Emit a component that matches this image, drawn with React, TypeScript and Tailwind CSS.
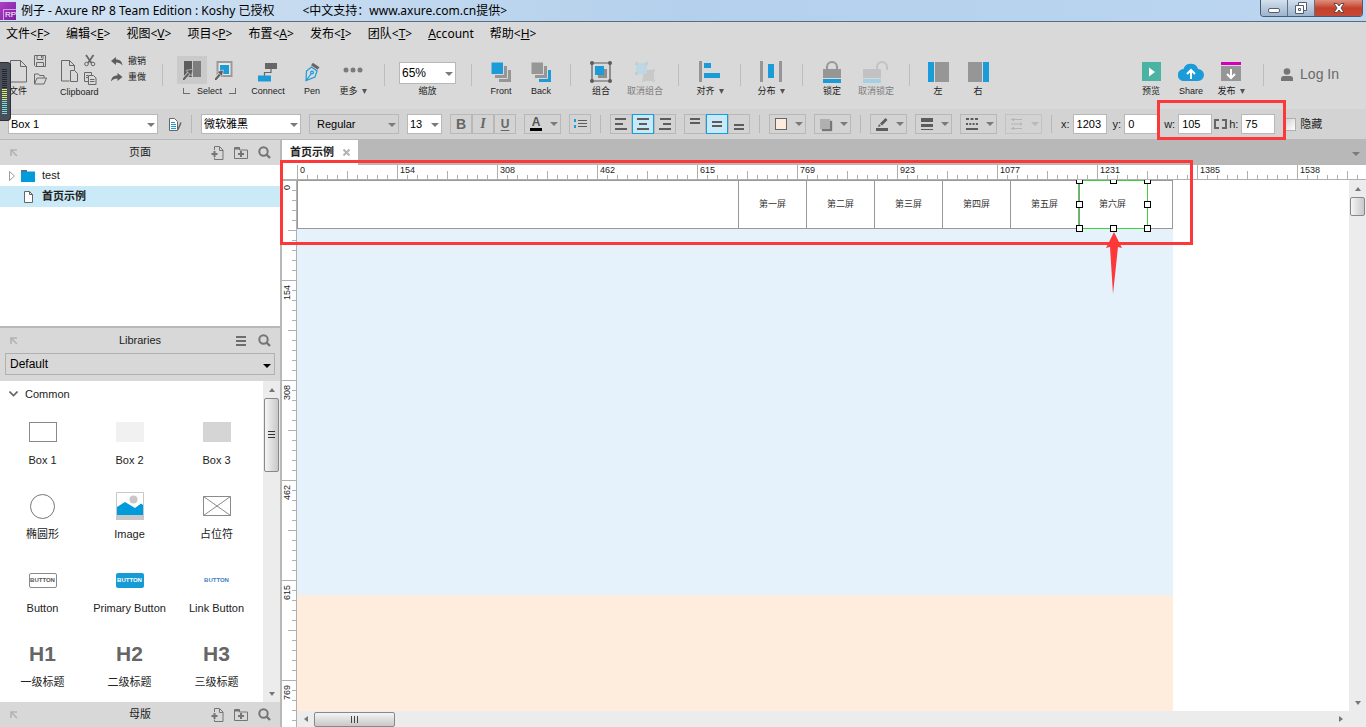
import { ReactNode } from 'react';
import clsx from 'clsx';

const topRuler = ['0', '154', '308', '462', '615', '769', '923', '1077', '1231', '1385', '1538'];
const sideRuler = ['0', '154', '308', '462', '615', '769'];
const screens = ['第一屏', '第二屏', '第三屏', '第四屏', '第五屏', '第六屏'];

const menus = [
  { label: '文件', hotkey: 'F' },
  { label: '编辑', hotkey: 'E' },
  { label: '视图', hotkey: 'V' },
  { label: '项目', hotkey: 'P' },
  { label: '布置', hotkey: 'A' },
  { label: '发布', hotkey: 'I' },
  { label: '团队', hotkey: 'T' },
  { label: 'Account', hotkey: '' },
  { label: '帮助', hotkey: 'H' },
];

const handles = [
  '-left-1 -top-1',
  'left-[30px] -top-1',
  '-right-1 -top-1',
  '-left-1 top-[20px]',
  '-right-1 top-[20px]',
  '-left-1 -bottom-1',
  'left-[30px] -bottom-1',
  '-right-1 -bottom-1',
];

function Caret({ className = 'text-[#7a7a7a]' }: { className?: string }) {
  return (
    <svg width="8" height="4" viewBox="0 0 8 4" className={clsx('shrink-0', className)}>
      <path d="M0 0h8L4 4z" fill="currentColor" />
    </svg>
  );
}

function ScrollArrow({ className }: { className?: string }) {
  return (
    <svg width="6" height="4" viewBox="0 0 6 4" className={className}>
      <path d="M0 0h6L3 4z" fill="#777" />
    </svg>
  );
}

function ToolSep({ className }: { className?: string }) {
  return <div className={clsx('mt-[18px] h-[22px] w-px shrink-0 bg-[#bdbdbd]', className)} />;
}

function Tool({
  label,
  width,
  disabled,
  menu,
  children,
}: {
  label: string;
  width: string;
  disabled?: boolean;
  menu?: boolean;
  children: ReactNode;
}) {
  return (
    <button
      className={clsx(
        'flex shrink-0 flex-col items-center pt-[12px] text-[9px] leading-[12px] whitespace-nowrap',
        width,
        disabled ? 'text-[#7c7c7c]' : 'text-[#1c1c1c]',
      )}
    >
      <span className="flex h-[27px] items-center justify-center">{children}</span>
      <span className="flex items-center gap-1">
        {label}
        {menu && (
          <svg width="5" height="5" viewBox="0 0 5 5">
            <path d="M0 0h5L2.5 5z" fill="#555" />
          </svg>
        )}
      </span>
    </button>
  );
}

function Picker({
  label,
  value,
  width,
  gray,
  height = 'h-5',
  text = 'text-[11px]',
}: {
  label: string;
  value: string;
  width: string;
  gray?: boolean;
  height?: string;
  text?: string;
}) {
  return (
    <div className={clsx('relative shrink-0', width)}>
      <select
        aria-label={label}
        defaultValue={value}
        className={clsx(
          'block w-full appearance-none border border-[#b8b8b8] text-black outline-none',
          height,
          text,
          gray ? 'bg-transparent pl-[7px]' : 'bg-white pl-[2px]',
        )}
      >
        <option>{value}</option>
      </select>
      <span className="pointer-events-none absolute inset-y-0 right-[3px] flex items-center pt-px">
        <Caret />
      </span>
    </div>
  );
}

function FormatSep() {
  return <div className="mx-px h-[18px] w-px shrink-0 bg-[#b8b8b8]" />;
}

function Toggle({ label, active, children }: { label: string; active?: boolean; children: ReactNode }) {
  return (
    <button
      aria-label={label}
      className={clsx(
        'flex h-5 w-[22px] shrink-0 items-center justify-center border',
        active ? 'border-[#1b9cd8] bg-[#c9e9f8]' : 'border-[#b8b8b8]',
      )}
    >
      {children}
    </button>
  );
}

function DropButton({ label, disabled, children }: { label: string; disabled?: boolean; children: ReactNode }) {
  return (
    <button
      aria-label={label}
      className={clsx(
        'flex h-5 w-[37px] shrink-0 items-center justify-between border border-[#b8b8b8] pr-[2px] pl-[5px]',
        disabled && 'opacity-60',
      )}
    >
      {children}
      <Caret className={disabled ? 'text-[#a8a8a8]' : 'text-[#7a7a7a]'} />
    </button>
  );
}

function Lines({ rows }: { rows: [number, number, number][] }) {
  return (
    <svg width="14" height="14" viewBox="0 0 14 14" fill="#5c5c5c">
      {rows.map(([x, y, w]) => (
        <rect key={y} x={x} y={y} width={w} height="2" />
      ))}
    </svg>
  );
}

function NumberField({ label, value }: { label: string; value: string }) {
  return (
    <label className="flex shrink-0 items-center gap-[3px]">
      <span>{label}</span>
      <input
        defaultValue={value}
        className="h-5 w-[34px] border border-[#b8b8b8] bg-white pl-[3px] text-black outline-none"
      />
    </label>
  );
}

function PopOutIcon() {
  return (
    <svg width="8" height="8" viewBox="0 0 8 8" className="ml-[10px]" fill="none" stroke="#b3b3b3" strokeWidth="1.6">
      <path d="M1 7V1h6M1 1l6 6" />
    </svg>
  );
}

function SearchIcon() {
  return (
    <svg width="13" height="13" viewBox="0 0 13 13" fill="none" stroke="#757575" strokeWidth="2">
      <circle cx="5.5" cy="5.5" r="4.2" />
      <path d="M8.5 8.5l3.500 3.500" strokeWidth="2.4" />
    </svg>
  );
}

function AddPageIcon() {
  return (
    <svg width="13" height="14" viewBox="0 0 13 14" fill="none" stroke="#757575">
      <path d="M3.500 4V.5h5l3.500 3.500v9.500H3.500v-2M8.500 1v3.500H12" />
      <path d="M3.500 5v6M.5 8h6" strokeWidth="2" />
    </svg>
  );
}

function AddFolderIcon() {
  return (
    <svg width="14" height="12" viewBox="0 0 14 12" fill="none" stroke="#757575">
      <path d="M.5 11.500V.5h5V3h8v8.500z" />
      <path d="M1 1.500h4.500" strokeWidth="2" />
      <path d="M7 4v6M4 7h6" strokeWidth="2" />
    </svg>
  );
}

function MenuIcon() {
  return (
    <svg width="10" height="10" viewBox="0 0 10 10" fill="#6d6d6d">
      <path d="M0 0h10v2H0zM0 4h10v2H0zM0 8h10v2H0z" />
    </svg>
  );
}

function PanelHeader({ title, children }: { title: string; children: ReactNode }) {
  return (
    <div className="grid h-[25px] shrink-0 grid-cols-[1fr_auto_1fr] items-center bg-[#d8d8d8] text-[11px] text-[#222]">
      <button aria-label={`Pop out ${title}`}>
        <PopOutIcon />
      </button>
      <h2>{title}</h2>
      <div className="flex items-center justify-end gap-[10px] pr-[9px]">{children}</div>
    </div>
  );
}

function PageTools() {
  return (
    <>
      <button aria-label="Add page">
        <AddPageIcon />
      </button>
      <button aria-label="Add folder">
        <AddFolderIcon />
      </button>
      <button aria-label="Search">
        <SearchIcon />
      </button>
    </>
  );
}

function Widget({ label, children }: { label: string; children: ReactNode }) {
  return (
    <div className="flex h-[74px] flex-col items-center">
      <div className="flex h-7 items-center justify-center">{children}</div>
      <span className="mt-[7px] leading-[14px] whitespace-nowrap">{label}</span>
    </div>
  );
}

function PageIcon({ className }: { className?: string }) {
  return (
    <svg width="18" height="23" viewBox="0 0 18 23" fill="none" stroke="#686868" className={className}>
      <path d="M.5.5h10l6 6v15.500H.5zM10.500.5v6h6" />
    </svg>
  );
}

function TitleBar() {
  return (
    <header className="flex h-[22px] shrink-0 items-center justify-between border-b border-[#5b6b80] bg-linear-to-r from-[#d3e3f3] via-[#b4d0ec] to-[#bcd6f0] font-['Noto_Sans','Noto_Sans_CJK_SC',sans-serif] text-[12px] text-black">
      <div className="flex items-center whitespace-nowrap">
        <div className="mr-[5px] flex h-[18px] w-4 items-end justify-end bg-linear-to-br from-[#b03fc6] to-[#7a1fa0] font-['Liberation_Sans',sans-serif] text-[8px] leading-[10px] text-white">
          <span className="border-t border-l border-[#d79be4] pl-px">RP</span>
        </div>
        <h1>例子 - Axure RP 8 Team Edition : Koshy 已授权</h1>
        <span className="ml-7">&lt;中文支持：www.axure.com.cn提供&gt;</span>
      </div>
      <div className="mr-[3px] flex h-[17px] self-start overflow-hidden rounded-b border border-t-0 border-[#4a5a70]">
        <button
          aria-label="Minimize"
          className="flex w-[27px] items-end justify-center border-r border-[#5f7088] bg-linear-to-b from-[#d3e0ee] to-[#9db3cc] pb-[3px]"
        >
          <span className="h-[5px] w-3 rounded-xs border border-[#555d6b] bg-white" />
        </button>
        <button
          aria-label="Restore"
          className="flex w-[27px] items-center justify-center border-r border-[#5f7088] bg-linear-to-b from-[#d3e0ee] to-[#9db3cc]"
        >
          <svg width="12" height="12" viewBox="0 0 12 12" fill="#fff" stroke="#555d6b">
            <path d="M3.500.5h8v8h-8z" />
            <path d="M.5 3.500h8v8h-8z" />
            <path d="M3.500 6.500h2v2h-2z" />
          </svg>
        </button>
        <button
          aria-label="Close"
          className="flex w-[47px] items-center justify-center bg-linear-to-b from-[#dd8f7e] via-[#c5402c] to-[#c54a35]"
        >
          <svg width="12" height="10" viewBox="0 0 12 10">
            <path d="M1 .5h3l2 2.500L8 .5h3L8 5l3 4.500H8L6 7 4 9.500H1L4 5z" fill="#fff" stroke="#5b4a50" />
          </svg>
        </button>
      </div>
    </header>
  );
}

function Toolbar() {
  return (
    <div className="flex h-[63px] shrink-0 items-start text-[#1c1c1c]">
      <div className="h-full w-[56px] shrink-0">
        <div className="flex pt-[9px] pl-[10px]">
          <PageIcon className="mt-[5px]" />
          <div className="ml-[6px] flex flex-col gap-[6px]">
            <svg width="13" height="12" viewBox="0 0 13 12" fill="none" stroke="#686868">
              <path d="M.5.5h11v11H1.500l-1-1zM3 .5v4h6v-4M2.500 11V7.500h7V11M7.500 1v2" />
            </svg>
            <svg width="13" height="12" viewBox="0 0 13 12" fill="none" stroke="#686868">
              <path d="M.5 11V1h4l1 1.500h4.500V5M.5 11l2.500-6h9.500l-2.500 6z" />
            </svg>
          </div>
        </div>
        <div className="pl-[9px] text-[9px] leading-[12px]">文件</div>
      </div>
      <div className="h-full w-[50px] shrink-0">
        <div className="flex pt-[8px] pl-[5px]">
          <svg width="18" height="23" viewBox="0 0 18 23" fill="none" stroke="#686868" className="mt-[6px]">
            <path d="M8.500 21H.5V.5h8l5 5V10M8.500.5v5h5" />
            <path d="M9.500 10.500h4l3 3v8h-7z" />
          </svg>
          <div className="ml-[5px] flex flex-col gap-[5px]">
            <svg width="12" height="13" viewBox="0 0 12 13" fill="none" stroke="#686868">
              <path d="M2 1l5.500 8M9.500 1L4 9" strokeWidth="1.8" />
              <circle cx="2.5" cy="10" r="1.8" />
              <circle cx="9" cy="10" r="1.8" />
            </svg>
            <svg width="13" height="13" viewBox="0 0 13 13" fill="none" stroke="#686868">
              <path d="M4 9.500H.5V.5h7V3M4.500 3.500h5l2.500 2.500v6.500H4.500zM6 7.500h4.500M6 9.500h4.500M2 3.500h2M2 5.500h2" />
            </svg>
          </div>
        </div>
        <div className="pt-px pl-1 text-[9px] leading-[12px]">Clipboard</div>
      </div>
      <div className="flex w-[56px] shrink-0 flex-col gap-1 pt-[9px] pl-[5px] text-[9px] leading-[12px]">
        <button className="flex items-center gap-[5px]">
          <svg width="12" height="9" viewBox="0 0 12 9" fill="#5c5c5c">
            <path d="M0 4l5-4v2.500c4 0 6 2 6.500 6C10 6.500 8 5.500 5 5.500V8z" />
          </svg>
          撤销
        </button>
        <button className="flex items-center gap-[5px]">
          <svg width="12" height="9" viewBox="0 0 12 9" fill="#5c5c5c">
            <path d="M11.500 4l-5-4v2.500C2.500 2.500.5 4.500 0 8.500 1.500 6.500 3.500 5.500 6.500 5.500V8z" />
          </svg>
          重做
        </button>
      </div>
      <ToolSep />
      <div className="ml-[14px] w-[65px] shrink-0 pt-[10px] text-[9px] leading-[12px]">
        <div className="flex gap-2">
          <button aria-label="Select intersected" className="flex h-7 w-[30px] items-center justify-center bg-[#cacaca]">
            <svg width="18" height="20" viewBox="0 0 18 20">
              <path d="M1 1h8v16H1z" fill="#5c5c5c" />
              <path d="M10 1h8v16h-8z" fill="#7d7d7d" />
              <path d="M0 20l7-8" stroke="#cacaca" strokeWidth="4" />
              <path d="M0 20l7-8" stroke="#5c5c5c" strokeWidth="2" />
              <path d="M3 10.500L10 9l-1.500 7z" fill="#5c5c5c" stroke="#cacaca" strokeWidth=".7" />
            </svg>
          </button>
          <button aria-label="Select contained" className="flex h-7 items-center">
            <svg width="18" height="20" viewBox="0 0 18 20">
              <path d="M2.500 2h14v14h-14z" fill="#e8e8e8" stroke="#9a9a9a" strokeWidth="2" />
              <path d="M5 5h9v9H5z" fill="#1b9cd8" />
              <path d="M0 20l7-8" stroke="#d9d9d9" strokeWidth="4" />
              <path d="M0 20l7-8" stroke="#5c5c5c" strokeWidth="2" />
              <path d="M2 11.500L8.500 10 7 16.500z" fill="#5c5c5c" stroke="#d9d9d9" strokeWidth=".7" />
            </svg>
          </button>
        </div>
        <div className="flex items-center pt-px pl-[6px]">
          <span className="h-[6px] w-[7px] border-b border-l border-[#6d6d6d]" />
          <span className="mx-[7px]">Select</span>
          <span className="h-[6px] w-[7px] border-r border-b border-[#6d6d6d]" />
        </div>
      </div>
      <Tool label="Connect" width="w-[52px]">
        <svg width="20" height="20" viewBox="0 0 20 20">
          <path d="M7 1h12v6H7z" fill="#666" />
          <path d="M13 7v3.500H6.500V14" fill="none" stroke="#666" strokeWidth="1.2" />
          <path d="M0 13.500h13v6H0z" fill="#1b9cd8" />
        </svg>
      </Tool>
      <Tool label="Pen" width="w-[36px]">
        <svg width="15" height="20" viewBox="0 0 15 20" fill="none" stroke="#1b9cd8" strokeWidth="1.2">
          <path d="M1 18.500L1.500 9l5-4 5.500 4-2 6zM1.500 18l4.500-6" />
          <circle cx="7" cy="10.5" r="1.4" />
          <path d="M7 2l6.500 4.500" stroke="#666" strokeWidth="3.2" />
        </svg>
      </Tool>
      <Tool label="更多" width="w-[46px]" menu>
        <svg width="20" height="6" viewBox="0 0 20 6" fill="#7b7b7b" className="-mt-1">
          <circle cx="3" cy="3" r="2.5" />
          <circle cx="10" cy="3" r="2.5" />
          <circle cx="17" cy="3" r="2.5" />
        </svg>
      </Tool>
      <ToolSep className="ml-2" />
      <div className="ml-[14px] flex shrink-0 flex-col items-center gap-px pt-4 text-[9px] leading-[12px]">
        <Picker label="缩放" value="65%" width="w-[57px]" height="h-[22px]" text="text-[12px]" />
        <span>缩放</span>
      </div>
      <ToolSep className="mr-[9px] ml-[15px]" />
      <Tool label="Front" width="w-[40px]">
        <svg width="20" height="20" viewBox="0 0 20 20">
          <path d="M8 8h12v12H8z" fill="#969696" />
          <path d="M3.500 3.500h13v13h-13z" fill="#969696" stroke="#d9d9d9" />
          <path d="M0 0h12.500v12.500H0z" fill="#1b9cd8" stroke="#d9d9d9" />
        </svg>
      </Tool>
      <Tool label="Back" width="w-[40px]">
        <svg width="20" height="20" viewBox="0 0 20 20">
          <path d="M8 8h12v12H8z" fill="#1b9cd8" />
          <path d="M3.500 3.500h13v13h-13z" fill="#969696" stroke="#d9d9d9" />
          <path d="M0 0h12.500v12.500H0z" fill="#969696" stroke="#d9d9d9" />
        </svg>
      </Tool>
      <ToolSep className="mr-2 ml-[9px]" />
      <Tool label="组合" width="w-[44px]">
        <svg width="22" height="22" viewBox="0 0 22 22">
          <path d="M8 8h9v9H8z" fill="#8e8e8e" />
          <path d="M5 5h9v9H5z" fill="#1b9cd8" />
          <path d="M2 2h18v18H2z" fill="none" stroke="#5c5c5c" strokeWidth="1.2" />
          <g fill="#5c5c5c">
            <circle cx="2" cy="2" r="2" />
            <circle cx="20" cy="2" r="2" />
            <circle cx="2" cy="20" r="2" />
            <circle cx="20" cy="20" r="2" />
          </g>
        </svg>
      </Tool>
      <Tool label="取消组合" width="w-[44px]" disabled>
        <svg width="22" height="22" viewBox="0 0 22 22">
          <path d="M9 9h11v11H9z" fill="#c8c8c8" />
          <path d="M2 2h11v11H2z" fill="#bdd8e4" />
          <path d="M1 1h3v3H1zM11 1h3v3h-3zM1 11h3v3H1zM18 8h3v3h-3zM8 18h3v3H8zM18 18h3v3h-3z" fill="#c6cdd1" />
        </svg>
      </Tool>
      <ToolSep className="mr-2 ml-[11px]" />
      <Tool label="对齐" width="w-[46px]" menu>
        <svg width="22" height="21" viewBox="0 0 22 21">
          <path d="M0 0h3v21H0z" fill="#969696" />
          <path d="M5 2h7v5H5zM5 12h16v5H5z" fill="#1b9cd8" />
        </svg>
      </Tool>
      <ToolSep className="mx-[7px]" />
      <Tool label="分布" width="w-[46px]" menu>
        <svg width="22" height="21" viewBox="0 0 22 21">
          <path d="M0 0h3v21H0zM19 0h3v21h-3z" fill="#969696" />
          <path d="M8 3h6v14H8z" fill="#1b9cd8" />
        </svg>
      </Tool>
      <ToolSep className="mr-[7px] ml-2" />
      <Tool label="锁定" width="w-[44px]">
        <svg width="18" height="22" viewBox="0 0 18 22">
          <path d="M4 9V6a5 5 0 0 1 10 0v3" fill="none" stroke="#969696" strokeWidth="2" />
          <path d="M0 8h18v9H0z" fill="#969696" />
          <path d="M0 18h18v4H0z" fill="#1b9cd8" />
        </svg>
      </Tool>
      <Tool label="取消锁定" width="w-[44px]" disabled>
        <svg width="26" height="22" viewBox="0 0 26 22">
          <path d="M14 9V6a5 5 0 0 1 10 0v3" fill="none" stroke="#c2c2c2" strokeWidth="2" />
          <path d="M0 8h18v9H0z" fill="#c2c2c2" />
          <path d="M0 18h18v4H0z" fill="#a5cfe4" />
        </svg>
      </Tool>
      <ToolSep className="mr-2 ml-[11px]" />
      <Tool label="左" width="w-[40px]">
        <svg width="21" height="20" viewBox="0 0 21 20">
          <path d="M0 0h6v20H0z" fill="#1b9cd8" />
          <path d="M7 0h14v20H7z" fill="#969696" />
        </svg>
      </Tool>
      <Tool label="右" width="w-[40px]">
        <svg width="21" height="20" viewBox="0 0 21 20">
          <path d="M15 0h6v20h-6z" fill="#1b9cd8" />
          <path d="M0 0h14v20H0z" fill="#969696" />
        </svg>
      </Tool>
      <div className="ml-auto flex items-start">
        <Tool label="预览" width="w-[40px]">
          <svg width="19" height="19" viewBox="0 0 19 19">
            <path d="M0 0h19v19H0z" fill="#4bb3a4" />
            <path d="M7 5.500l6 4.500-6 4.500z" fill="#fff" />
          </svg>
        </Tool>
        <Tool label="Share" width="w-[40px]">
          <svg width="26" height="19" viewBox="0 0 26 19">
            <path d="M6 19a6 6 0 0 1-.5-12A7.500 7 0 0 1 20 7a6 6 0 0 1 0 12z" fill="#1b9cd8" />
            <path d="M13 17V9M9 12l4-4 4 4" fill="none" stroke="#fff" strokeWidth="2" />
          </svg>
        </Tool>
        <Tool label="发布" width="w-[40px]" menu>
          <svg width="20" height="19" viewBox="0 0 20 19">
            <path d="M0 0h20v3H0z" fill="#d400b8" />
            <path d="M0 4h20v15H0z" fill="#969696" />
            <path d="M10 7v8M6 12l4 4 4-4" fill="none" stroke="#fff" strokeWidth="2" />
          </svg>
        </Tool>
        <ToolSep className="mr-[17px] ml-3" />
        <button className="mr-[27px] flex items-center gap-[7px] pt-[17px] text-[14px] leading-[22px] text-[#6a6a6a]">
          <svg width="12" height="13" viewBox="0 0 12 13" fill="#757575">
            <circle cx="6" cy="3.5" r="3.3" />
            <path d="M0 13V10.500Q0 8 3 8h6q3 0 3 2.500V13z" />
          </svg>
          Log In
        </button>
      </div>
    </div>
  );
}

function FormatBar() {
  return (
    <div className="flex h-[31px] shrink-0 items-center gap-2 border-b border-[#b8b8b8] bg-[#d3d3d3] pl-2 text-[11px] text-[#222]">
      <Picker label="Widget" value="Box 1" width="w-[150px]" />
      <button aria-label="Manage styles" className="flex w-4 shrink-0 justify-end">
        <svg width="14" height="13" viewBox="0 0 14 13" fill="none" stroke="#666">
          <path d="M1.500.5h5l3 3v9h-8z" fill="#fff" />
          <path d="M3 4.500h4M3 6.500h5M3 8.500h5M3 10.500h5" stroke="#1b9cd8" />
          <path d="M13 4.500l-3 7" strokeWidth="1.5" />
        </svg>
      </button>
      <FormatSep />
      <Picker label="Font" value="微软雅黑" width="w-[100px]" />
      <Picker label="Weight" value="Regular" width="w-[90px]" gray />
      <Picker label="Size" value="13" width="w-[35px]" />
      <div className="flex shrink-0 text-[14px] leading-[18px] font-bold text-[#666]">
        <Toggle label="Bold">B</Toggle>
        <Toggle label="Italic">
          <span className="font-['Liberation_Serif',serif] italic">I</span>
        </Toggle>
        <Toggle label="Underline">
          <span className="text-[12px] underline underline-offset-2">U</span>
        </Toggle>
      </div>
      <DropButton label="Text color">
        <span className="h-[14px] w-3 border-b-[3px] border-black text-[12px] leading-[11px] font-bold text-[#555]">A</span>
      </DropButton>
      <Toggle label="Bullets">
        <svg width="13" height="10" viewBox="0 0 13 10">
          <path d="M0 0h2v3H0zM0 6h2v3H0z" fill="#1b9cd8" />
          <path d="M4 1h9v1H4zM4 4h9v1H4zM4 7h9v1H4z" fill="#5c5c5c" />
        </svg>
      </Toggle>
      <FormatSep />
      <div className="flex shrink-0">
        <Toggle label="Align left">
          <Lines rows={[[1, 1, 11], [1, 6, 8], [1, 11, 12]]} />
        </Toggle>
        <Toggle label="Align center" active>
          <Lines rows={[[1, 1, 12], [3, 6, 8], [1, 11, 12]]} />
        </Toggle>
        <Toggle label="Align right">
          <Lines rows={[[2, 1, 11], [5, 6, 8], [1, 11, 12]]} />
        </Toggle>
      </div>
      <div className="flex shrink-0">
        <Toggle label="Align top">
          <Lines rows={[[2, 1, 10], [2, 5, 10]]} />
        </Toggle>
        <Toggle label="Align middle" active>
          <Lines rows={[[2, 4, 10], [2, 8, 10]]} />
        </Toggle>
        <Toggle label="Align bottom">
          <Lines rows={[[2, 7, 10], [2, 11, 10]]} />
        </Toggle>
      </div>
      <FormatSep />
      <DropButton label="Fill color">
        <span className="h-3 w-3 border border-[#666] bg-[#fdebdd]" />
      </DropButton>
      <DropButton label="Shadow">
        <span className="h-[10px] w-[10px] bg-[#b0b0b0] shadow-[2px_2px_1px_#777]" />
      </DropButton>
      <FormatSep />
      <DropButton label="Line color">
        <svg width="13" height="13" viewBox="0 0 13 13" fill="#5c5c5c">
          <path d="M0 10h12v3H0zM2 9l1-3 2 2zM4 5.500L9.500 0l2 2L6 7.500z" />
        </svg>
      </DropButton>
      <DropButton label="Line width">
        <svg width="12" height="12" viewBox="0 0 12 12" fill="#5c5c5c">
          <path d="M0 0h12v4H0zM0 6h12v3H0zM0 11h12v1H0z" />
        </svg>
      </DropButton>
      <DropButton label="Line style">
        <svg width="12" height="12" viewBox="0 0 12 12" stroke="#5c5c5c" strokeWidth="2">
          <path d="M0 1h12" strokeDasharray="3 1.5" />
          <path d="M0 6h12" strokeDasharray="2 1.3" />
          <path d="M0 11h12" />
        </svg>
      </DropButton>
      <DropButton label="Arrow style" disabled>
        <svg width="12" height="12" viewBox="0 0 12 12" fill="none" stroke="#a0a0a0">
          <path d="M0 1.500h11M3 0L1 1.500 3 3M0 6h11M9 4.500L11 6 9 7.500M0 10.500h11M3 9l-2 1.500L3 12" />
        </svg>
      </DropButton>
      <FormatSep />
      <div className="flex items-center gap-[6px]">
        <NumberField label="x:" value="1203" />
        <NumberField label="y:" value="0" />
        <NumberField label="w:" value="105" />
      </div>
      <div className="-ml-[6px] flex items-center gap-[2px]">
        <button aria-label="Lock aspect ratio" className="shrink-0">
          <svg width="13" height="10" viewBox="0 0 13 10" fill="none" stroke="#666" strokeWidth="2">
            <path d="M5 1H1v8h4M8 1h4v8H8" />
          </svg>
        </button>
        <NumberField label="h:" value="75" />
      </div>
      <label className="flex shrink-0 items-center gap-1">
        <input
          type="checkbox"
          className="h-[13px] w-[13px] appearance-none border border-[#b0b0b0] bg-linear-to-br from-[#d0d0d0] to-white"
        />
        <span>隐藏</span>
      </label>
    </div>
  );
}

function Sidebar() {
  return (
    <aside className="flex w-[282px] shrink-0 flex-col border-r-2 border-[#b8b8b8] bg-white text-[11px] text-[#222]">
      <PanelHeader title="页面">
        <PageTools />
      </PanelHeader>
      <ul className="h-[161px] shrink-0">
        <li className="flex h-[21px] items-center pl-[9px]">
          <svg width="6" height="10" viewBox="0 0 6 10" fill="none" stroke="#999">
            <path d="M.5.5v9L5.500 5z" />
          </svg>
          <svg width="14" height="12" viewBox="0 0 14 12" className="mr-[7px] ml-[6px]">
            <path d="M0 0h6v2H0z" fill="#666" />
            <path d="M0 1.500h14V12H0z" fill="#009bdb" />
          </svg>
          test
        </li>
        <li className="flex h-[21px] items-center bg-[#cbeaf7] pl-6 font-bold">
          <svg width="9" height="12" viewBox="0 0 9 12" fill="#fff" stroke="#666" className="mr-[9px]">
            <path d="M.5.5h5l3 3v8h-8zM5.500.5v3h3" />
          </svg>
          首页示例
        </li>
      </ul>
      <div className="shrink-0 border-t-2 border-[#b8b8b8] bg-[#d8d8d8] pb-[6px]">
        <PanelHeader title="Libraries">
          <button aria-label="Library options" className="mr-[2px]">
            <MenuIcon />
          </button>
          <button aria-label="Search">
            <SearchIcon />
          </button>
        </PanelHeader>
        <div className="relative mx-[5px]">
          <select
            aria-label="Library"
            defaultValue="Default"
            className="block h-[22px] w-full appearance-none border border-[#b0b0b0] pl-1 text-[12px] text-black outline-none"
          >
            <option>Default</option>
          </select>
          <span className="pointer-events-none absolute inset-y-0 right-1 flex items-center pt-[3px]">
            <Caret className="text-black" />
          </span>
        </div>
      </div>
      <div className="flex min-h-0 flex-1">
        <div className="min-w-0 flex-1 overflow-hidden">
          <div className="flex h-[26px] items-center gap-[7px] pl-[9px]">
            <svg width="9" height="6" viewBox="0 0 9 6" fill="none" stroke="#666" strokeWidth="1.6">
              <path d="M.5.5l4 4 4-4" />
            </svg>
            Common
          </div>
          <div className="-ml-px grid grid-cols-3 pt-[11px] pr-[3px]">
            <Widget label="Box 1">
              <span className="h-5 w-7 border border-[#8a8a8a]" />
            </Widget>
            <Widget label="Box 2">
              <span className="h-5 w-7 bg-[#f1f1f1]" />
            </Widget>
            <Widget label="Box 3">
              <span className="h-5 w-7 bg-[#d5d5d5]" />
            </Widget>
            <Widget label="椭圆形">
              <span className="h-[25px] w-[25px] rounded-full border border-[#777]" />
            </Widget>
            <Widget label="Image">
              <svg width="28" height="28" viewBox="0 0 28 28">
                <path d="M.5.5h27v27H.5z" fill="#fff" stroke="#c8c8c8" />
                <path d="M0 23h28v5H0z" fill="#c8c8c8" />
                <circle cx="17.5" cy="7.5" r="4" fill="#c8c8c8" />
                <path d="M1 15l8-5 10 6 6-4.500 2 1.500v10H1z" fill="#009bdb" />
              </svg>
            </Widget>
            <Widget label="占位符">
              <svg width="28" height="20" viewBox="0 0 28 20" fill="none" stroke="#8a8a8a">
                <path d="M.5.5h27v19H.5zM.5.5l27 19M27.500.5l-27 19" />
              </svg>
            </Widget>
            <Widget label="Button">
              <span className="h-[15px] w-7 rounded-xs border border-[#8a8a8a] text-center text-[6px] leading-[13px] font-bold text-[#555]">
                BUTTON
              </span>
            </Widget>
            <Widget label="Primary Button">
              <span className="h-[15px] w-7 rounded-xs bg-[#169bd5] text-center text-[6px] leading-[15px] font-bold text-white">
                BUTTON
              </span>
            </Widget>
            <Widget label="Link Button">
              <span className="text-[6px] leading-[15px] font-bold text-[#3f7fc0]">BUTTON</span>
            </Widget>
            <Widget label="一级标题">
              <span className="text-[21px] leading-7 font-bold text-[#666]">H1</span>
            </Widget>
            <Widget label="二级标题">
              <span className="text-[21px] leading-7 font-bold text-[#666]">H2</span>
            </Widget>
            <Widget label="三级标题">
              <span className="text-[21px] leading-7 font-bold text-[#666]">H3</span>
            </Widget>
          </div>
        </div>
        <div className="flex w-[17px] shrink-0 flex-col items-center bg-[#ececec]">
          <span className="flex h-[17px] items-center">
            <ScrollArrow className="rotate-180" />
          </span>
          <div className="flex h-[74px] w-[15px] items-center justify-center rounded-xs border border-[#888] bg-linear-to-r from-[#f5f5f5] to-[#c8c8c8]">
            <svg width="7" height="8" viewBox="0 0 7 8" fill="#333">
              <path d="M0 0h7v1H0zM0 3h7v1H0zM0 6h7v1H0z" />
            </svg>
          </div>
          <span className="mt-auto flex h-[17px] items-center">
            <ScrollArrow />
          </span>
        </div>
      </div>
      <PanelHeader title="母版">
        <PageTools />
      </PanelHeader>
    </aside>
  );
}

function TopRuler() {
  return (
    <div className="flex h-[15px] shrink-0 overflow-hidden border-b border-[#b0b0b0] bg-white">
      <div className="w-[15px] shrink-0" />
      {topRuler.map((mark) => (
        <div key={mark} className="relative flex w-[100px] shrink-0 items-end">
          <span className="absolute top-0 left-[3px] text-[9px] leading-[11px] text-[#222]">{mark}</span>
          {Array.from({ length: 10 }, (_, i) => (
            <i
              key={i}
              className={clsx('w-[10px] border-l border-[#b0b0b0]', i === 0 ? 'h-[14px]' : i === 5 ? 'h-2' : 'h-1')}
            />
          ))}
        </div>
      ))}
    </div>
  );
}

function SideRuler() {
  return (
    <div className="flex w-[15px] shrink-0 flex-col overflow-hidden border-r border-[#b0b0b0] bg-white">
      {sideRuler.map((mark) => (
        <div key={mark} className="relative flex h-[100px] shrink-0 flex-col items-end">
          <span className="absolute top-[5px] left-0 rotate-180 text-[9px] leading-[11px] text-[#222] [writing-mode:vertical-rl]">
            {mark}
          </span>
          {Array.from({ length: 10 }, (_, i) => (
            <i
              key={i}
              className={clsx('h-[10px] border-t border-[#b0b0b0]', i === 0 ? 'w-[14px]' : i === 5 ? 'w-2' : 'w-1')}
            />
          ))}
        </div>
      ))}
    </div>
  );
}

function Canvas() {
  return (
    <div className="min-h-0 min-w-0 flex-1 overflow-hidden bg-white">
      <div className="flex h-full w-[876px] flex-col">
        <div className="flex h-[49px] shrink-0 justify-end border border-[#999] bg-white pr-[26px]">
          {screens.map((name, i) => (
            <div
              key={name}
              className="relative flex w-[68px] items-center justify-center border-l border-[#999] text-[9px] text-[#333]"
            >
              {name}
              {i === screens.length - 1 && (
                <div className="absolute -top-px -right-[2px] -bottom-px left-0 border border-[#3fd03f]">
                  {handles.map((pos) => (
                    <i key={pos} className={clsx('absolute h-[7px] w-[7px] border border-black bg-white', pos)} />
                  ))}
                </div>
              )}
            </div>
          ))}
        </div>
        <div className="h-[366px] shrink-0 bg-[#e5f2fc]" />
        <div className="flex-1 bg-[#feecdd]" />
      </div>
    </div>
  );
}

function Workspace() {
  return (
    <main className="flex min-w-0 flex-1 flex-col">
      <div className="flex h-[25px] shrink-0 items-stretch justify-between bg-[#b8b8b8]">
        <div className="flex w-[76px] items-center gap-[9px] bg-white pl-2 text-[11px] font-bold whitespace-nowrap text-[#222]">
          首页示例
          <button aria-label="Close tab">
            <svg width="7" height="7" viewBox="0 0 7 7" stroke="#b3b3b3" strokeWidth="2">
              <path d="M.5.5l6 6M6.500.5l-6 6" />
            </svg>
          </button>
        </div>
        <button aria-label="Tab list" className="mr-[6px] pt-[3px]">
          <Caret />
        </button>
      </div>
      <TopRuler />
      <div className="flex min-h-0 flex-1">
        <SideRuler />
        <div className="flex min-w-0 flex-1 flex-col">
          <div className="flex min-h-0 flex-1">
            <Canvas />
            <div className="flex w-[17px] shrink-0 flex-col items-center bg-[#ececec]">
              <span className="flex h-[17px] items-center">
                <ScrollArrow className="rotate-180" />
              </span>
              <div className="h-[19px] w-[15px] rounded-xs border border-[#888] bg-linear-to-r from-[#f5f5f5] to-[#c8c8c8]" />
              <span className="mt-auto flex h-[17px] items-center">
                <ScrollArrow />
              </span>
            </div>
          </div>
          <div className="flex h-4 shrink-0 items-center bg-[#ececec] pr-[17px]">
            <span className="flex w-[17px] justify-center">
              <ScrollArrow className="rotate-90" />
            </span>
            <div className="flex h-[15px] w-[81px] items-center justify-center rounded-xs border border-[#888] bg-linear-to-b from-[#f5f5f5] to-[#c8c8c8]">
              <svg width="8" height="7" viewBox="0 0 8 7" fill="#444">
                <path d="M0 0h1v7H0zM3 0h1v7H3zM6 0h1v7H6z" />
              </svg>
            </div>
            <span className="ml-auto flex w-[17px] justify-center">
              <ScrollArrow className="-rotate-90" />
            </span>
          </div>
        </div>
      </div>
    </main>
  );
}

function VolumeMeter() {
  return (
    <div className="absolute top-[62px] left-0 flex h-[59px] w-[11px] flex-col justify-center gap-px rounded-r-sm border border-l-0 border-[#2c2f37] bg-[#4a4e58] pl-[2px]">
      {Array.from({ length: 23 }, (_, i) => (
        <i
          key={i}
          className={clsx('h-px w-[5px]', i < 10 ? 'bg-[#23262d]' : i < 16 ? 'bg-[#dcee70]' : 'bg-[#76e0dc]')}
        />
      ))}
    </div>
  );
}

export default function App() {
  return (
    <div className="relative flex h-screen w-full flex-col overflow-hidden bg-[#d9d9d9] font-['Liberation_Sans','Noto_Sans_CJK_SC',sans-serif]">
      <TitleBar />
      <nav className="flex h-6 shrink-0 items-center gap-4 pl-[6px] font-['Noto_Sans','Noto_Sans_CJK_SC',sans-serif] text-[12px] text-black">
        {menus.map(({ label, hotkey }) => (
          <button key={label} className="whitespace-nowrap">
            {hotkey ? (
              <>
                {label}&lt;<u>{hotkey}</u>&gt;
              </>
            ) : (
              <>
                <u>{label[0]}</u>
                {label.slice(1)}
              </>
            )}
          </button>
        ))}
      </nav>
      <Toolbar />
      <FormatBar />
      <div className="flex min-h-0 flex-1">
        <Sidebar />
        <Workspace />
      </div>

      <VolumeMeter />
      <div className="pointer-events-none absolute top-[100px] left-[1157px] h-10 w-[129px] border-3 border-[#fd3838]" />
      <div className="pointer-events-none absolute top-[160px] left-[280px] h-[85px] w-[913px] border-3 border-[#fd3838]" />
      <svg
        width="16"
        height="62"
        viewBox="0 0 16 62"
        className="pointer-events-none absolute top-[232px] left-[1106px]"
        fill="#fd3838"
      >
        <path d="M8 0l8 16-4-1-5 47L4 15l-4 1z" />
      </svg>
    </div>
  );
}
